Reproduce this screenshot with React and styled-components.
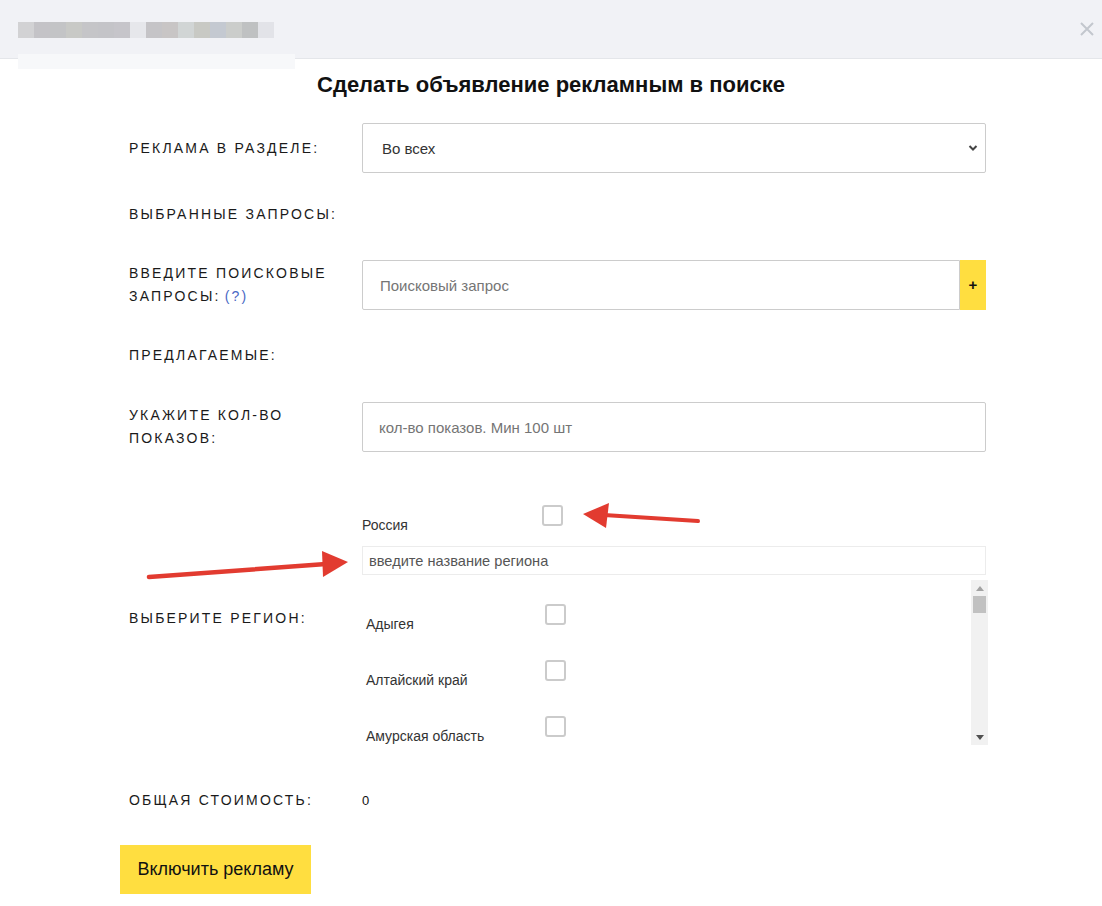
import React from "react"
import styled, { createGlobalStyle } from "styled-components"

const GlobalStyle = createGlobalStyle`
  html, body {
    margin: 0;
    padding: 0;
    background: #fff;
    font-family: "Liberation Sans", Arial, sans-serif;
    color: #111;
  }
`

const Page = styled.div`
  position: relative;
  width: 1102px;
  min-height: 906px;
  background: #fff;
`

const Header = styled.div`
  height: 59px;
  border-bottom: 1px solid #e4e6ea;
  background: #f1f2f6;
  display: flex;
  align-items: flex-start;
  justify-content: space-between;
  padding: 22px 7px 0 18px;
  box-sizing: border-box;
`

const Blurred = styled.div`
  display: flex;
`

const Pixel = styled.span`
  width: 16px;
  height: 16px;
  background: ${p => p.$color};
`

const Close = styled.button`
  border: 0;
  background: transparent;
  padding: 0;
  margin-top: -1px;
  width: 16px;
  height: 16px;
  display: flex;
`

const Ghost = styled.div`
  position: relative;
  margin: -5px 0 0 18px;
  width: 277px;
  height: 15px;
  background: #f7f8fa;
`

const Title = styled.h1`
  margin: 3px 0 0;
  text-align: center;
  font-size: 22px;
  line-height: 26px;
  font-weight: 700;
  color: #111;
`

const Form = styled.div`
  padding-left: 120px;
  display: flex;
  flex-direction: column;
`

const Row = styled.div`
  display: grid;
  grid-template-columns: 242px 626px;
  align-items: center;
  margin-top: ${p => p.$mt}px;
`

const Label = styled.div`
  padding-left: 9px;
  font-size: 14px;
  line-height: 23px;
  letter-spacing: 2.2px;
  text-transform: uppercase;
  color: #1a1a1a;
  padding-right: 8px;
`

const Line = styled.div``

const Hint = styled.span`
  color: #4a68c4;
  margin-left: 4px;
`

const Field = styled.div`
  width: 624px;
  height: 50px;
  box-sizing: border-box;
  border: 1px solid #cccccc;
  border-radius: 2px;
  display: flex;
  align-items: center;
  font-size: 15px;
  padding-left: ${p => p.$pad}px;
  color: ${p => (p.$placeholder ? "#757575" : "#333")};
  background: #fff;
`

const SelectBox = styled(Field)`
  justify-content: space-between;
  padding-right: 7px;
`

const SearchWrap = styled.div`
  display: flex;
  width: 624px;
`

const SearchField = styled(Field)`
  flex: 1;
  width: auto;
  border-radius: 2px 0 0 2px;
`

const PlusButton = styled.button`
  width: 26px;
  height: 50px;
  border: 0;
  padding: 0 0 2px;
  background: #ffde40;
  font-family: "Liberation Sans", Arial, sans-serif;
  font-size: 15px;
  font-weight: 700;
  color: #111;
`

const RegionColumn = styled.div`
  padding-top: 14px;
  display: flex;
  flex-direction: column;
`

const CheckRow = styled.div`
  display: flex;
  flex-shrink: 0;
  align-items: flex-start;
  height: ${p => p.$h}px;
  padding-left: ${p => p.$indent}px;
`

const CheckLabel = styled.span`
  width: ${p => p.$w}px;
  margin-top: ${p => p.$top}px;
  font-size: 14px;
  line-height: 16px;
  color: #333;
`

const Box = styled.span`
  width: 21px;
  height: 21px;
  box-sizing: border-box;
  border: 2px solid #cbcbcb;
  border-radius: 3px;
  background: #fff;
  margin-top: ${p => p.$top}px;
`

const RegionSearch = styled.div`
  margin-top: 14px;
  width: 624px;
  height: 29px;
  box-sizing: border-box;
  border: 1px solid #ececec;
  display: flex;
  align-items: center;
  padding-left: 6px;
  font-size: 14.6px;
  color: #555;
`

const ListWrap = styled.div`
  margin-top: 5px;
  height: 165px;
  display: flex;
  overflow: hidden;
`

const List = styled.div`
  flex: 1;
  display: flex;
  flex-direction: column;
`

const Track = styled.div`
  width: 17px;
  background: #f1f1f1;
  display: flex;
  flex-direction: column;
  align-items: center;
`

const ArrowBtn = styled.div`
  height: 16px;
  display: flex;
  align-items: center;
  justify-content: center;
`

const Thumb = styled.div`
  width: 13px;
  height: 17px;
  background: #c1c1c1;
`

const TrackSpace = styled.div`
  flex: 1;
`

const Value = styled.div`
  font-size: 13px;
  color: #111;
`

const SubmitButton = styled.button`
  margin-top: 33px;
  align-self: flex-start;
  height: 49px;
  width: 191px;
  border: 0;
  background: #ffde40;
  font-family: "Liberation Sans", Arial, sans-serif;
  font-size: 18px;
  color: #111;
  padding: 0;
`

const Annotations = styled.svg`
  position: absolute;
  left: 0;
  top: 0;
  pointer-events: none;
`

const pixels = [
  "#d2d2d4", "#c4c3c7", "#c3c4c6", "#c8c9c6", "#c5c5c8", "#c4c4c8", "#c6c5ca", "#e6e7eb",
  "#c5c4c7", "#c8c5c5", "#d1d5d5", "#c8c9c4", "#c4c9d1", "#cbcdcb", "#bfc1c2", "#e2e3e8",
]

const regions = ["Адыгея", "Алтайский край", "Амурская область"]

export default function App() {
  return (
    <Page>
      <GlobalStyle />
      <Header>
        <Blurred>
          {pixels.map((c, i) => (
            <Pixel key={i} $color={c} />
          ))}
        </Blurred>
        <Close aria-label="close">
          <svg width="16" height="16" viewBox="0 0 16 16">
            <path d="M2 2 L14 14 M14 2 L2 14" stroke="#c3c7ce" strokeWidth="2" />
          </svg>
        </Close>
      </Header>
      <Ghost />
      <Title>Сделать объявление рекламным в поиске</Title>

      <Form>
        <Row $mt={25}>
          <Label>Реклама в разделе:</Label>
          <SelectBox $pad={19}>
            <span>Во всех</span>
            <svg width="10" height="8" viewBox="0 0 10 8">
              <path d="M1.5 2 L5 5.5 L8.5 2" stroke="#444" strokeWidth="2" fill="none" />
            </svg>
          </SelectBox>
        </Row>

        <Row $mt={30}>
          <Label>Выбранные запросы:</Label>
        </Row>

        <Row $mt={34}>
          <Label>
            <Line>Введите поисковые</Line>
            <Line>
              запросы:<Hint>(?)</Hint>
            </Line>
          </Label>
          <SearchWrap>
            <SearchField $pad={17} $placeholder>
              Поисковый запрос
            </SearchField>
            <PlusButton>+</PlusButton>
          </SearchWrap>
        </Row>

        <Row $mt={34}>
          <Label>Предлагаемые:</Label>
        </Row>

        <Row $mt={35}>
          <Label>Укажите кол-во показов:</Label>
          <Field $pad={16} $placeholder>
            кол-во показов. Мин 100 шт
          </Field>
        </Row>

        <Row $mt={39}>
          <Label>Выберите регион:</Label>
          <RegionColumn>
            <CheckRow $h={27} $indent={0}>
              <CheckLabel $w={180} $top={12}>Россия</CheckLabel>
              <Box $top={0} />
            </CheckRow>
            <RegionSearch>введите название региона</RegionSearch>
            <ListWrap>
              <List>
                {regions.map(r => (
                  <CheckRow key={r} $h={56} $indent={4}>
                    <CheckLabel $w={179} $top={36}>{r}</CheckLabel>
                    <Box $top={24} />
                  </CheckRow>
                ))}
              </List>
              <Track>
                <ArrowBtn>
                  <svg width="8" height="5" viewBox="0 0 8 5">
                    <path d="M0 5 L4 0 L8 5 Z" fill="#a3a3a3" />
                  </svg>
                </ArrowBtn>
                <Thumb />
                <TrackSpace />
                <ArrowBtn>
                  <svg width="8" height="5" viewBox="0 0 8 5">
                    <path d="M0 0 L8 0 L4 5 Z" fill="#505050" />
                  </svg>
                </ArrowBtn>
              </Track>
            </ListWrap>
          </RegionColumn>
        </Row>

        <Row $mt={44}>
          <Label>Общая стоимость:</Label>
          <Value>0</Value>
        </Row>

        <SubmitButton>Включить рекламу</SubmitButton>
      </Form>

      <Annotations width="1102" height="906" viewBox="0 0 1102 906">
        <path d="M698 521 L604 515" stroke="#e23b30" strokeWidth="4" strokeLinecap="round" />
        <path d="M583 514 L609 503 L606 528 Z" fill="#e23b30" />
        <path d="M149 577 L326 564" stroke="#e23b30" strokeWidth="4.5" strokeLinecap="round" />
        <path d="M348 562 L322 551 L323 577 Z" fill="#e23b30" />
      </Annotations>
    </Page>
  )
}
